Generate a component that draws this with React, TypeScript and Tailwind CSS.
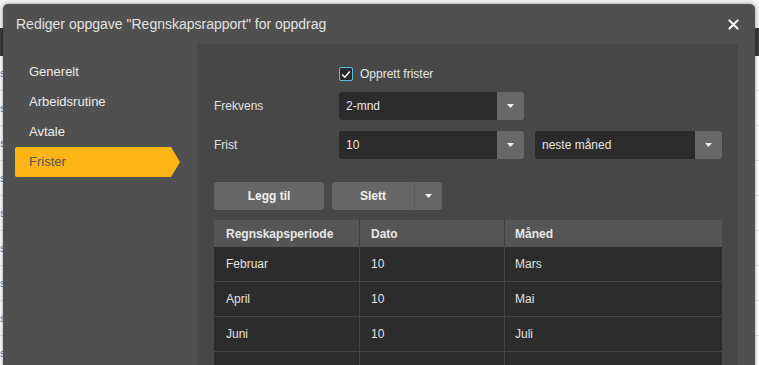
import React from "react";

const Caret = () => (
  <svg width="7" height="4" viewBox="0 0 7 4" className="block">
    <path d="M0 0 H7 L3.5 4 Z" fill="#f0f0f0" />
  </svg>
);

const Select = ({ value, w }: { value: string; w: string }) => (
  <div className={`flex h-[28px] ${w}`}>
    <div className="flex-1 bg-[#2b2b2b] rounded-l-[3px] flex items-center pl-[7px] text-[12px] text-[#e6e6e6]">
      {value}
    </div>
    <div className="w-[27px] bg-[#686868] rounded-r-[3px] flex items-center justify-center">
      <Caret />
    </div>
  </div>
);

const rows = [
  ["Februar", "10", "Mars"],
  ["April", "10", "Mai"],
  ["Juni", "10", "Juli"],
  ["", "", ""],
];

export default function App() {
  return (
    <div
      className="relative w-[759px] h-[365px] overflow-hidden bg-white"
      style={{ fontFamily: '"Liberation Sans", Arial, sans-serif' }}
    >
      {/* background page */}
      <div className="flex flex-col">
        <div className="h-[28px] bg-[#f4f4f4]" />
        <div className="h-[28px] bg-[#3a3a3a]" />
        {Array.from({ length: 9 }).map((_, i) => (
          <div key={i} className="h-[35px] border-b border-[#e4e4e4] flex items-center text-[11px] text-[#3a8fd0] pl-[0px]">
            s
          </div>
        ))}
      </div>

      {/* modal */}
      <div className="absolute left-[3px] top-[4px] w-[752px] h-[420px] rounded-[5px] bg-[#505050] shadow-[0_0_4px_rgba(0,0,0,0.4)] flex flex-col">
        <div className="h-[40px] flex items-center justify-between pl-[13px] pr-[16px]">
          <span className="text-[14px] text-[#e2e2e2]">Rediger oppgave "Regnskapsrapport" for oppdrag</span>
          <svg width="11" height="11" viewBox="0 0 11 11">
            <path d="M1.5 1.5 L9.5 9.5 M9.5 1.5 L1.5 9.5" stroke="#f2f2f2" strokeWidth="2.2" strokeLinecap="round" />
          </svg>
        </div>
        <div className="flex flex-1">
          <nav className="w-[194px] pt-[13px] pl-[12px] flex flex-col text-[13px] text-[#ececec]">
            <div className="h-[30px] flex items-center pl-[14px]">Generelt</div>
            <div className="h-[30px] flex items-center pl-[14px]">Arbeidsrutine</div>
            <div className="h-[30px] flex items-center pl-[14px]">Avtale</div>
            <div className="h-[30px] w-[165px] flex items-center pl-[14px] bg-[#fdb515] text-[#555555] rounded-l-[2px] [clip-path:polygon(0_0,calc(100%-9px)_0,100%_50%,calc(100%-9px)_100%,0_100%)]">
              Frister
            </div>
          </nav>
          <main className="w-[541px] bg-[#474747] pl-[17px] pr-[16px] flex flex-col">
            <div className="mt-[23px] h-[14px] flex items-center pl-[125px] gap-[7px]">
              <div className="w-[14px] h-[14px] rounded-[2px] border border-[#5bc0de] bg-[#2b2b2b] flex items-center justify-center">
                <svg width="10" height="9" viewBox="0 0 10 9">
                  <path d="M1.2 4.6 L3.8 7.2 L8.8 1.4" stroke="#f4f4f4" strokeWidth="1.6" fill="none" />
                </svg>
              </div>
              <span className="text-[12px] text-[#e6e6e6]">Opprett frister</span>
            </div>
            <div className="mt-[11px] flex items-center">
              <span className="w-[125px] text-[12px] text-[#e2e2e2]">Frekvens</span>
              <Select value="2-mnd" w="w-[185px]" />
            </div>
            <div className="mt-[11px] flex items-center">
              <span className="w-[125px] text-[12px] text-[#e2e2e2]">Frist</span>
              <Select value="10" w="w-[185px]" />
              <div className="ml-[11px]">
                <Select value="neste måned" w="w-[187px]" />
              </div>
            </div>
            <div className="mt-[23px] flex gap-[8px] h-[28px]">
              <button className="w-[110px] h-[28px] rounded-[3px] bg-[#666666] text-[12px] font-bold text-[#f0f0f0]">
                Legg til
              </button>
              <div className="flex h-[28px]">
                <button className="w-[83px] h-[28px] rounded-l-[3px] bg-[#666666] text-[12px] font-bold text-[#f0f0f0] border-r border-[#5a5a5a]">
                  Slett
                </button>
                <div className="w-[27px] h-[28px] rounded-r-[3px] bg-[#666666] flex items-center justify-center">
                  <Caret />
                </div>
              </div>
            </div>
            <div className="mt-[10px] w-[508px] text-[12px]">
              <div className="grid grid-cols-[146px_145px_217px] h-[27px] bg-[#555555] font-bold text-[#e8e8e8]">
                <div className="flex items-center pl-[12px] border-r border-[#3e3e3e]">Regnskapsperiode</div>
                <div className="flex items-center pl-[11px] border-r border-[#3e3e3e]">Dato</div>
                <div className="flex items-center pl-[10px]">Måned</div>
              </div>
              {rows.map((r, i) => (
                <div key={i} className="grid grid-cols-[146px_145px_217px] h-[35px] bg-[#2c2c2c] border-b border-[#454545] text-[#e2e2e2]">
                  <div className="flex items-center pl-[12px] border-r border-[#454545]">{r[0]}</div>
                  <div className="flex items-center pl-[11px] border-r border-[#454545]">{r[1]}</div>
                  <div className="flex items-center pl-[10px]">{r[2]}</div>
                </div>
              ))}
            </div>
          </main>
        </div>
      </div>
    </div>
  );
}
